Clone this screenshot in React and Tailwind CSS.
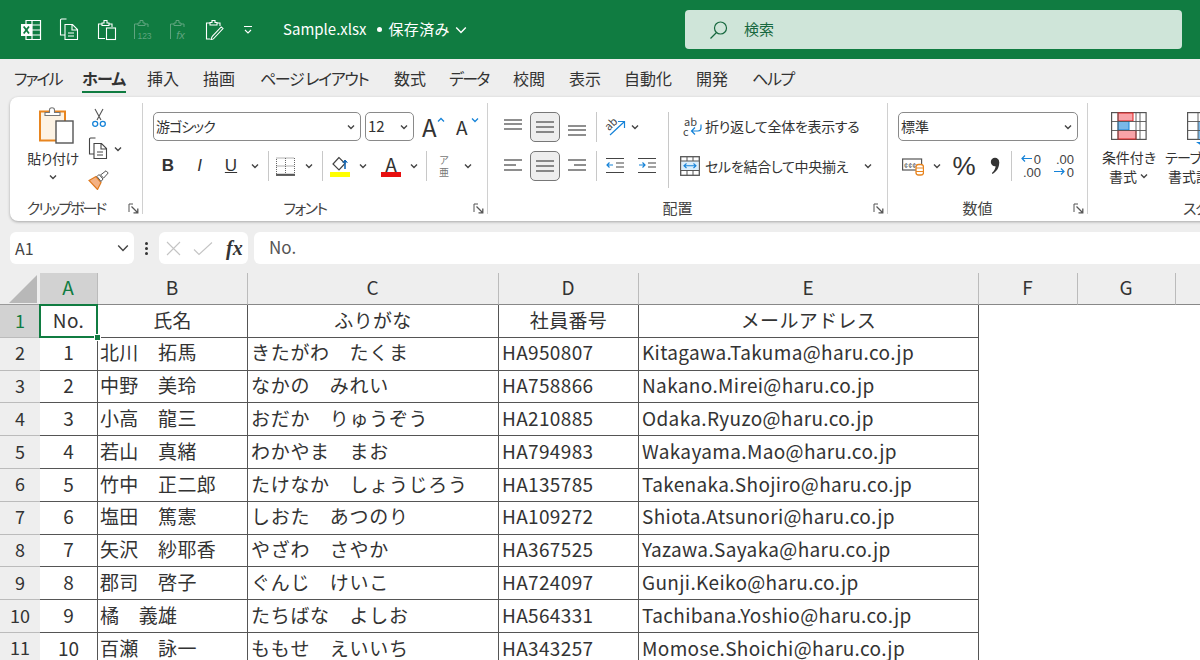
import React from "react";

const rows = [
  ["1", "北川　拓馬", "きたがわ　たくま", "HA950807", "Kitagawa.Takuma@haru.co.jp"],
  ["2", "中野　美玲", "なかの　みれい", "HA758866", "Nakano.Mirei@haru.co.jp"],
  ["3", "小高　龍三", "おだか　りゅうぞう", "HA210885", "Odaka.Ryuzo@haru.co.jp"],
  ["4", "若山　真緒", "わかやま　まお", "HA794983", "Wakayama.Mao@haru.co.jp"],
  ["5", "竹中　正二郎", "たけなか　しょうじろう", "HA135785", "Takenaka.Shojiro@haru.co.jp"],
  ["6", "塩田　篤憲", "しおた　あつのり", "HA109272", "Shiota.Atsunori@haru.co.jp"],
  ["7", "矢沢　紗耶香", "やざわ　さやか", "HA367525", "Yazawa.Sayaka@haru.co.jp"],
  ["8", "郡司　啓子", "ぐんじ　けいこ", "HA724097", "Gunji.Keiko@haru.co.jp"],
  ["9", "橘　義雄", "たちばな　よしお", "HA564331", "Tachibana.Yoshio@haru.co.jp"],
  ["10", "百瀬　詠一", "ももせ　えいいち", "HA343257", "Momose.Shoichi@haru.co.jp"],
];

const tabs = [
  { t: "ファイル", w: "w-[68px]", c: "tracking-[-2px]" },
  { t: "ホーム", w: "w-[65px]", c: "tracking-[-0.7px] font-bold" },
  { t: "挿入", w: "w-[56px]", c: "" },
  { t: "描画", w: "w-[57px]", c: "" },
  { t: "ページ レイアウト", w: "w-[134px]", c: "tracking-[-1.4px]" },
  { t: "数式", w: "w-[55px]", c: "" },
  { t: "データ", w: "w-[64px]", c: "tracking-[-1.7px]" },
  { t: "校閲", w: "w-[56px]", c: "" },
  { t: "表示", w: "w-[55px]", c: "" },
  { t: "自動化", w: "w-[72px]", c: "" },
  { t: "開発", w: "w-[56px]", c: "" },
  { t: "ヘルプ", w: "w-[60px]", c: "tracking-[-1.3px]" },
];

const Chevron = ({ size = 10, color = "#444", width = 1.4 }) => (
  <svg width={size} height={size} viewBox="0 0 10 10" fill="none" stroke={color} strokeWidth={width}>
    <path d="M2 3.5 5 6.5 8 3.5" />
  </svg>
);

const Launcher = () => (
  <svg width="11" height="11" viewBox="0 0 11 11" fill="none" stroke="#555" strokeWidth="1">
    <path d="M5 1H1v8" />
    <path d="M3.5 3.5 9.5 9.5M9.8 5.5v4.3H5.5" strokeWidth="1.3" />
  </svg>
);

const Sep = ({ className = "h-[30px]" }) => <div className={`w-px bg-[#c8c8c8] shrink-0 ${className}`} />;

const Group = ({ label, w, labelClass = "", children }) => (
  <div className={`flex flex-col shrink-0 h-[111px] border-r border-[#d0d0d0] ${w}`}>
    <div className="h-[93px] shrink-0 pt-[9px] flex flex-col">{children}</div>
    <div className="h-[24px] shrink-0 flex items-center text-[15px] text-[#444]">
      <span className={`flex-1 text-center pr-[6px] ${labelClass}`}>{label}</span>
      <span className="mr-[3px] flex">
        <Launcher />
      </span>
    </div>
  </div>
);

const Combo = ({ w, text, textClass = "text-[14px]" }) => (
  <div className={`h-[29px] rounded-[5px] border border-[#8a8a8a] bg-white flex items-center justify-between pl-[2px] pr-[4px] shrink-0 ${w}`}>
    <span className={`text-[#333] ${textClass}`}>{text}</span>
    <Chevron />
  </div>
);

const ExcelIcon = () => (
  <svg width="22" height="22" viewBox="0 0 22 22" fill="none" stroke="#fff" strokeWidth="1.2">
    <path d="M6 1.5h14.5v19H6z" />
    <path d="M12 1.5v19M12 6h8.5M12 11h8.5M12 16h8.5" />
    <rect x="1" y="5" width="11" height="12" fill="#fff" stroke="none" />
    <path d="M3.7 7.5 9 14.5M9 7.5 3.7 14.5" stroke="#107C41" strokeWidth="1.8" />
  </svg>
);

const CopyIcon = ({ color = "#fff" }) => (
  <svg width="20" height="23" viewBox="0 0 20 23" fill="none" stroke={color} strokeWidth="1.1">
    <path d="M6 17H1.5V2a1 1 0 0 1 1-1h5" />
    <path d="M6 6.5h7.5l5 5v10H6zM13 6.5V12h5.5M9 15h6M9 18h6" />
  </svg>
);

const PasteIcon = ({ color = "#fff" }) => (
  <svg width="20" height="22" viewBox="0 0 20 22" fill="none" stroke={color} strokeWidth="1.1">
    <path d="M8 19.5H1.5V5H5M12 5h3v3" />
    <path d="M5 6.5V4h2V1.5h3V4h2v2.5z" />
    <rect x="9.5" y="9" width="9" height="11.5" />
  </svg>
);

const PasteTextIcon = ({ label, italic }) => (
  <svg width="20" height="22" viewBox="0 0 20 22" fill="none" stroke="#5fa47f" strokeWidth="1">
    <path d="M1.5 20V5H5M12 5h3v3" />
    <path d="M5 6.5V4h2V1.5h3V4h2v2.5z" />
    <text x="11.5" y="20" textAnchor="middle" fontSize={italic ? 11 : 8.5} fontStyle={italic ? "italic" : "normal"} fill="#5fa47f" stroke="none" fontFamily="Liberation Sans, sans-serif">
      {label}
    </text>
  </svg>
);

const FormIcon = () => (
  <svg width="21" height="22" viewBox="0 0 21 22" fill="none" stroke="#fff" strokeWidth="1.1">
    <path d="M5 20H1.5V4H5M12 4h3v3" />
    <path d="M5 6V3.5h2V1.5h3v2h2V6z" />
    <path d="M6 20.5c1.5.2 2.5-.5 3.2-1.5L18 9.5l-1.8-1.6-8.7 9.3c-.8.9-1 2.1-1.5 3.3z" />
  </svg>
);

const Qat = () => (
  <svg width="12" height="12" viewBox="0 0 12 12" fill="none" stroke="#fff" strokeWidth="1.1">
    <path d="M2 2.5h8M3 6 6 9 9 6" />
  </svg>
);

const SearchIcon = () => (
  <svg width="20" height="20" viewBox="0 0 20 20" fill="none" stroke="#17683f" strokeWidth="1.2">
    <circle cx="11.5" cy="8" r="6" />
    <path d="M7.5 12.5 1.5 18.5" />
  </svg>
);

const ClipboardBig = () => (
  <svg width="36" height="38" viewBox="0 0 36 38" fill="none">
    <rect x="1" y="4.5" width="25" height="29" fill="#fdf3e4" stroke="#e8851f" strokeWidth="2" />
    <path d="M6 8.5V5.500h4.500V3c0-1.200 1-2.200 2.500-2.200S15.500 1.800 15.500 3v2.500H21v3z" fill="#fff" stroke="#777" strokeWidth="1.1" />
    <rect x="17" y="14" width="17" height="22" fill="#fff" stroke="#555" strokeWidth="1.4" />
  </svg>
);

const Scissors = () => (
  <svg width="16" height="20" viewBox="0 0 16 20" fill="none" stroke="#555" strokeWidth="1.1">
    <path d="M4 1 10 12M12 1 6 12" />
    <circle cx="4.2" cy="15.8" r="2.5" stroke="#1683d8" strokeWidth="1.3" />
    <circle cx="11.8" cy="15.8" r="2.5" stroke="#1683d8" strokeWidth="1.3" />
  </svg>
);

const Brush = () => (
  <svg width="22" height="20" viewBox="0 0 22 20" fill="none">
    <path d="M1 10.5 8 6.5 13 12.5 9.500 19.500z" fill="#f4b183" stroke="#e07a1f" strokeWidth="1.2" />
    <path d="M9 6.5 11 4.5 15 9 13 11.5z" fill="#fff" stroke="#555" />
    <path d="M12.5 5 18 .8l2.200 2.200-4.500 5z" fill="#fff" stroke="#555" />
  </svg>
);

const GrowA = ({ up }) => (
  <span className="relative flex items-center w-[22px] h-[24px]">
    <span className={`text-[#333] leading-none ${up ? "text-[24px]" : "text-[19px]"}`}>A</span>
    <svg className="absolute -right-[1px] top-[2px]" width="8" height="6" viewBox="0 0 8 6" fill="none" stroke="#1683d8" strokeWidth="1.3">
      <path d={up ? "M1 4.5 4 1.500 7 4.500" : "M1 1.500 4 4.500 7 1.500"} />
    </svg>
  </span>
);

const BorderIcon = () => (
  <svg width="19" height="19" viewBox="0 0 19 19" fill="none" stroke="#666" strokeWidth="1" strokeDasharray="1 1">
    <path d="M.5 1h18v16H.5zM9.500 1v16M.5 9h18" />
    <path d="M0 18h19" stroke="#222" strokeWidth="1.4" strokeDasharray="none" />
  </svg>
);

const FillIcon = () => (
  <span className="flex flex-col items-center w-[20px]">
    <svg width="20" height="16" viewBox="0 0 20 16" fill="none">
      <path d="M9 1.500 3 8l6 6 6-6.500z" fill="#fff" stroke="#444" strokeWidth="1.2" />
      <path d="M15 13V5.500" stroke="#1668b5" strokeWidth="1.6" />
      <path d="M12.800 6.500 15 4l2.500 2.500" fill="#1668b5" stroke="#1668b5" />
    </svg>
    <span className="h-[5px] w-[20px] bg-[#ffff00]" />
  </span>
);

const FontColorIcon = () => (
  <span className="flex flex-col items-center w-[20px]">
    <span className="text-[19px] leading-[16px] h-[16px] text-[#333]">A</span>
    <span className="h-[5px] w-[20px] bg-[#e81010]" />
  </span>
);

const Lines = ({ y, x }) => (
  <svg width="18" height="18" viewBox="0 0 18 18" fill="none" stroke="#444" strokeWidth="1.2">
    {y.map((yy, i) => (
      <path key={i} d={`M${x[i][0]} ${yy}H${x[i][1]}`} />
    ))}
  </svg>
);

const full = [[0, 18], [0, 18], [0, 18]];

const AlignBtn = ({ active, children }) => (
  <span className={`flex items-center justify-center w-[30px] h-[30px] rounded-[5px] shrink-0 ${active ? "border border-[#777] bg-[#eeeeee]" : ""}`}>{children}</span>
);

const OrientIcon = () => (
  <span className="relative block w-[22px] h-[20px]">
    <span className="absolute left-0 top-[1px] text-[11px] leading-none text-[#444] -rotate-45">ab</span>
    <svg className="absolute inset-0" width="22" height="20" viewBox="0 0 22 20" fill="none" stroke="#1683d8" strokeWidth="1.2">
      <path d="M6 18 20 5M14 4.500h6.500V11" />
    </svg>
  </span>
);

const IndentIcon = ({ out }) => (
  <svg width="18" height="18" viewBox="0 0 18 18" fill="none" strokeWidth="1.2">
    <path d="M0 1.500h18M10 6h8M10 10h8M0 15.500h18" stroke="#444" />
    <path d={out ? "M7 8H1M3.500 5.500 1 8l2.500 2.500" : "M1 8h6M4.500 5.500 7 8l-2.500 2.500"} stroke="#1683d8" />
  </svg>
);

const WrapIcon = () => (
  <span className="relative block w-[22px] h-[22px] text-[11px] leading-[10px] text-[#444]">
    <span className="block pl-[2px]">ab</span>
    <span className="block pl-[1px]">c</span>
    <svg className="absolute right-0 top-[7px]" width="14" height="13" viewBox="0 0 14 13" fill="none" stroke="#1683d8" strokeWidth="1.2">
      <path d="M11 1.500v3.500c0 2-1.500 3-3 3H2M5 4.500 1.500 8 5 11.500" />
    </svg>
  </span>
);

const MergeIcon = () => (
  <svg width="20" height="20" viewBox="0 0 20 20" fill="none">
    <rect x=".7" y=".7" width="18.6" height="18.6" fill="#fff" stroke="#555" strokeWidth="1.3" />
    <rect x="1.500" y="5" width="17" height="9.5" fill="#dbeefb" />
    <path d="M1 5h18M1 14.500h18M7 1v4M13 1v4M7 14.500v5M13 14.500v5" stroke="#555" strokeWidth="1" />
    <path d="M4 9.700h12M6.500 7.500 4 9.700l2.500 2.300M13.500 7.500 16 9.700l-2.500 2.300" stroke="#1683d8" strokeWidth="1.1" />
  </svg>
);

const CurrencyIcon = () => (
  <svg width="22" height="20" viewBox="0 0 22 20" fill="none">
    <rect x=".6" y="3" width="19" height="11" fill="#fff" stroke="#555" strokeWidth="1.2" />
    <text x="2" y="11.5" fontSize="7.5" fill="#555" fontFamily="Liberation Sans, sans-serif">¢¢¢</text>
    <rect x="14" y="8.5" width="7.5" height="10.5" rx="2.5" fill="#fff" stroke="#e8851f" strokeWidth="1.3" />
    <path d="M14 12h7.500M14 15.500h7.500" stroke="#e8851f" />
  </svg>
);

const CommaIcon = () => (
  <svg width="10" height="18" viewBox="0 0 10 18" fill="#333">
    <circle cx="5" cy="5" r="4.2" />
    <path d="M9.200 5c.3 5.500-2.500 9.500-6.700 12l-.6-.9C4.500 13.500 5.800 11 5.500 8.500z" />
  </svg>
);

const DecimalIcon = ({ more }) => (
  <span className="relative block w-[21px] h-[26px] text-[13px] leading-[13px] text-[#444] text-right font-['Liberation_Sans']">
    <span className="block h-[13px]">{more ? ".00" : "0"}</span>
    <span className="block h-[13px]">{more ? "0" : ".00"}</span>
    <svg className={`absolute left-0 ${more ? "top-[14px]" : "top-[1px]"}`} width="13" height="9" viewBox="0 0 13 9" fill="none" stroke="#1683d8" strokeWidth="1.2">
      <path d={more ? "M1 4.500h10M8 1.500l3 3-3 3" : "M12 4.500H2M5 1.500l-3 3 3 3"} />
    </svg>
  </span>
);

const CondIcon = () => (
  <svg width="36" height="28" viewBox="0 0 36 28" fill="none">
    <rect x=".6" y=".6" width="34.5" height="26.8" fill="#fff" stroke="#555" strokeWidth="1.2" />
    <rect x="7" y="1" width="15" height="8" fill="#f8a3a8" stroke="#e02020" />
    <rect x="7" y="9.5" width="11" height="8.5" fill="#7ab8e8" stroke="#1683d8" />
    <rect x="7" y="18.5" width="18" height="8.5" fill="#f8a3a8" stroke="#e02020" />
    <path d="M7 1v26M25 1v26M29 1v26M1 9.500h34M1 18.500h34" stroke="#555" strokeWidth=".9" />
  </svg>
);

const TableIcon = () => (
  <svg width="36" height="34" viewBox="0 0 36 34" fill="none">
    <rect x=".6" y=".6" width="34.5" height="26.8" fill="#fff" stroke="#555" strokeWidth="1.2" />
    <rect x="11" y="9.5" width="13" height="17.5" fill="#7ab8e8" />
    <path d="M11 1v26M24 1v26M1 9.500h34M1 18.500h34" stroke="#555" strokeWidth=".9" />
    <path d="M9 30h9l-4.500 3z" fill="#1683d8" />
  </svg>
);

const TitleBar = () => (
  <div className="h-[59px] bg-[#107C41] flex items-center shrink-0 text-white">
    <div className="flex items-center pl-[20px] w-[283px]">
      <span className="w-[39px] flex"><ExcelIcon /></span>
      <span className="w-[38px] flex"><CopyIcon /></span>
      <span className="w-[36px] flex"><PasteIcon /></span>
      <span className="w-[36px] flex"><PasteTextIcon label="123" /></span>
      <span className="w-[36px] flex"><PasteTextIcon label="fx" italic /></span>
      <span className="w-[37px] flex"><FormIcon /></span>
      <Qat />
    </div>
    <div className="flex items-center w-[402px] text-[15px] gap-[4px]">
      <span>Sample.xlsx</span>
      <span className="w-[5px] h-[5px] rounded-full bg-white ml-[6px] mr-[3px]" />
      <span className="tracking-[0.3px]">保存済み</span>
      <Chevron size={16} color="#fff" width={0.9} />
    </div>
    <div className="h-[39px] w-[497px] rounded-[4px] bg-[#cfe5d9] flex items-center pl-[24px] gap-[15px] text-[#17683f] text-[15px]">
      <SearchIcon />
      <span>検索</span>
    </div>
  </div>
);

const Tabs = () => (
  <div className="h-[38px] flex items-center pl-[14px] shrink-0 text-[16px] text-[#333]">
    {tabs.map(({ t, w, c }) => (
      <span key={t} className={`shrink-0 ${w}`}>
        <span className={`relative inline-block whitespace-nowrap ${c}`}>
          {t}
          {t === "ホーム" && <span className="absolute left-0 right-0 bottom-[-3px] h-[2px] bg-[#107C41]" />}
        </span>
      </span>
    ))}
  </div>
);

const Ribbon = () => (
  <div className="h-[124px] w-[1230px] ml-[10px] shrink-0 rounded-[8px] bg-white shadow-[0_1px_3px_rgba(0,0,0,0.3)] flex items-start pt-[6px]">
    <Group label="クリップボード" w="w-[133px]" labelClass="tracking-[-2px]">
      <div className="flex">
        <div className="flex flex-col items-center w-[52px] ml-[17px] -mt-[5px] text-[14px] text-[#333]">
          <span className="pl-[8px] flex"><ClipboardBig /></span>
          <span className="mt-[3px] tracking-[-0.4px]">貼り付け</span>
          <span className="mt-[3px]"><Chevron /></span>
        </div>
        <div className="flex flex-col pl-[9px] -mt-[10px]">
          <span className="h-[31px] flex items-center pl-[3px]"><Scissors /></span>
          <span className="h-[31px] flex items-center gap-[5px]">
            <CopyIcon color="#444" />
            <Chevron />
          </span>
          <span className="h-[31px] flex items-center"><Brush /></span>
        </div>
      </div>
    </Group>

    <Group label="フォント" w="w-[345px]" labelClass="tracking-[-1.5px]">
      <div className="flex items-center pl-[10px]">
        <Combo w="w-[208px]" text="游ゴシック" textClass="text-[14px] tracking-[-1px]" />
        <span className="w-[4px]" />
        <Combo w="w-[49px]" text="12" textClass="text-[15px]" />
        <span className="w-[8px]" />
        <GrowA up />
        <span className="w-[12px]" />
        <GrowA />
      </div>
      <div className="flex items-center h-[30px] mt-[10px] pl-[9px] text-[#333]">
        <span className="w-[32px] text-center font-bold text-[17px] font-['Liberation_Sans']">B</span>
        <span className="w-[31px] text-center italic text-[17px] font-['Liberation_Sans']">I</span>
        <span className="w-[32px] text-center underline text-[17px] font-['Liberation_Sans']">U</span>
        <span className="w-[16px] flex justify-center"><Chevron /></span>
        <span className="w-[5px]" />
        <Sep />
        <span className="w-[7px]" />
        <BorderIcon />
        <span className="w-[6px]" />
        <span className="w-[16px] flex justify-center"><Chevron /></span>
        <span className="w-[5px]" />
        <Sep />
        <span className="w-[7px]" />
        <FillIcon />
        <span className="w-[5px]" />
        <span className="w-[16px] flex justify-center"><Chevron /></span>
        <span className="w-[10px]" />
        <FontColorIcon />
        <span className="w-[5px]" />
        <span className="w-[16px] flex justify-center"><Chevron /></span>
        <span className="w-[4px]" />
        <Sep />
        <span className="w-[10px]" />
        <span className="flex flex-col items-center w-[14px] text-[10px] leading-[12px] text-[#777]">
          <span>ア</span>
          <span>亜</span>
        </span>
        <span className="w-[9px]" />
        <span className="w-[16px] flex justify-center"><Chevron /></span>
      </div>
    </Group>

    <Group label="配置" w="w-[400px]">
      <div className="flex items-center h-[29px] pl-[10px]">
        <AlignBtn><Lines y={[2, 6, 11]} x={full} /></AlignBtn>
        <span className="w-[2px]" />
        <AlignBtn active><Lines y={[4, 9, 14]} x={full} /></AlignBtn>
        <span className="w-[2px]" />
        <AlignBtn><Lines y={[8, 12, 17]} x={full} /></AlignBtn>
        <span className="w-[4px]" />
        <Sep />
        <span className="w-[7px]" />
        <OrientIcon />
        <span className="w-[4px]" />
        <Chevron />
        <span className="w-[28px]" />
        <Sep className="h-[76px] self-start" />
        <span className="w-[13px]" />
        <WrapIcon />
        <span className="w-[1px]" />
        <span className="text-[14px] text-[#333] tracking-[-0.3px]">折り返して全体を表示する</span>
      </div>
      <div className="flex items-center h-[30px] mt-[10px] pl-[10px]">
        <AlignBtn><Lines y={[3, 8, 13]} x={[[0, 18], [0, 12], [0, 18]]} /></AlignBtn>
        <span className="w-[2px]" />
        <AlignBtn active><Lines y={[4, 9, 14]} x={full} /></AlignBtn>
        <span className="w-[2px]" />
        <AlignBtn><Lines y={[3, 8, 13]} x={[[0, 18], [6, 18], [0, 18]]} /></AlignBtn>
        <span className="w-[4px]" />
        <Sep />
        <span className="w-[9px]" />
        <IndentIcon out />
        <span className="w-[14px]" />
        <IndentIcon />
        <span className="w-[24px]" />
        <MergeIcon />
        <span className="w-[5px]" />
        <span className="text-[14px] text-[#333] tracking-[-0.3px]">セルを結合して中央揃え</span>
        <span className="w-[15px]" />
        <Chevron />
      </div>
    </Group>

    <Group label="数値" w="w-[200px]">
      <div className="flex pl-[10px]">
        <Combo w="w-[180px]" text="標準" />
      </div>
      <div className="flex items-center h-[30px] mt-[10px] pl-[14px] text-[#333]">
        <CurrencyIcon />
        <span className="w-[8px]" />
        <Chevron />
        <span className="w-[9px]" />
        <span className="w-[26px] text-center text-[26px] leading-none font-['Liberation_Sans']">%</span>
        <span className="w-[13px]" />
        <CommaIcon />
        <span className="w-[11px]" />
        <Sep />
        <span className="w-[8px]" />
        <DecimalIcon />
        <span className="w-[12px]" />
        <DecimalIcon more />
      </div>
    </Group>

    <div className="flex flex-col h-[111px] shrink-0">
      <div className="h-[93px] shrink-0 pt-[9px] flex text-[14px] text-[#333] leading-[20px]">
        <div className="flex flex-col items-center w-[76px] pl-[6px] shrink-0">
          <CondIcon />
          <span className="mt-[7px] whitespace-nowrap">条件付き</span>
          <span className="flex items-center gap-[2px] -mt-[1px]">書式<Chevron /></span>
        </div>
        <div className="flex flex-col items-start shrink-0 pl-[1px]">
          <span className="ml-[22px] flex h-[35px]"><TableIcon /></span>
          <span className="whitespace-nowrap tracking-[-0.5px]">テーブルとして</span>
          <span className="pl-[3px] whitespace-nowrap -mt-[1px]">書式設定</span>
        </div>
      </div>
      <div className="h-[24px] shrink-0 flex items-center text-[15px] text-[#444] pl-[95px] tracking-[-1px]">スタイル</div>
    </div>
  </div>
);

const FormulaBar = () => (
  <div className="h-[32px] mt-[11px] flex items-stretch shrink-0 pl-[10px]">
    <div className="w-[124px] rounded-[6px] bg-white flex items-center justify-between pl-[5px] pr-[3px] text-[16px] text-[#444]">
      <span>A1</span>
      <Chevron size={16} width={0.9} />
    </div>
    <div className="w-[25px] flex flex-col items-center justify-center gap-[2px]">
      <span className="w-[3px] h-[3px] rounded-full bg-[#333]" />
      <span className="w-[3px] h-[3px] rounded-full bg-[#333]" />
      <span className="w-[3px] h-[3px] rounded-full bg-[#333]" />
    </div>
    <div className="w-[89px] rounded-[6px] bg-white flex items-center pl-[7px]">
      <svg width="15" height="15" viewBox="0 0 15 15" fill="none" stroke="#c4c4c4" strokeWidth="1.1">
        <path d="M1 1l13 13M14 1 1 14" />
      </svg>
      <svg className="ml-[12px]" width="20" height="15" viewBox="0 0 20 15" fill="none" stroke="#c4c4c4" strokeWidth="1.1">
        <path d="M1 8.500 6 13.500 19 1.500" />
      </svg>
      <span className="ml-[13px] italic font-bold text-[20px] leading-none text-[#333] font-['Liberation_Serif']">fx</span>
    </div>
    <div className="w-[6px]" />
    <div className="flex-1 rounded-l-[6px] bg-white flex items-center pl-[15px] pb-[2px] text-[17px] text-[#555]">No.</div>
  </div>
);

const headers = ["A", "B", "C", "D", "E", "F", "G", ""];
const cellBase = "border-r border-b border-[#555] pb-[2px] flex items-center text-[19px] text-[#333] whitespace-nowrap overflow-hidden [font-feature-settings:normal]";

const Sheet = () => (
  <div className="mt-[9px] grid grid-cols-[40px_58px_150px_251px_140px_340px_99px_98px_30px] grid-rows-[32px] auto-rows-[32.8px] bg-white flex-1 overflow-hidden">
    <div className="bg-[#eeeeee] border-b border-[#9a9a9a] flex items-end justify-end pr-[3px] pb-[1px]">
      <div className="w-[28px] h-[28px] bg-[#b8b8b8] [clip-path:polygon(100%_0,100%_100%,0_100%)]" />
    </div>
    {headers.map((h, i) => (
      <div
        key={i}
        className={`flex items-center justify-center pb-[2px] pr-[1px] text-[19px] border-r border-b border-[#bbbbbb] ${i === 0 ? "bg-[#d2d2d2] text-[#107C41] border-b-[#107C41]" : "bg-[#eeeeee] text-[#333] border-b-[#888]"}`}
      >
        {h}
      </div>
    ))}

    <div className="bg-[#d2d2d2] text-[#107C41] border-b border-[#bbbbbb] flex items-center justify-center text-[18px]">1</div>
    <div className={`${cellBase} justify-center relative overflow-visible tracking-[0.35px]`}>
      No.
      <span className="absolute -inset-[1px] border-2 border-[#107C41]" />
      <span className="absolute -right-[3px] -bottom-[3px] w-[5px] h-[5px] bg-[#107C41] outline outline-1 outline-white" />
    </div>
    <div className={`${cellBase} justify-center tracking-[0.35px]`}>氏名</div>
    <div className={`${cellBase} justify-center tracking-[0.35px]`}>ふりがな</div>
    <div className={`${cellBase} justify-center tracking-[0.35px]`}>社員番号</div>
    <div className={`${cellBase} justify-center tracking-[0.35px]`}>メールアドレス</div>
    <div className="col-span-3" />

    {rows.map((r, i) => (
      <React.Fragment key={i}>
        <div className="bg-[#eeeeee] border-b border-[#bbbbbb] pb-[2px] flex items-center justify-center text-[18px] text-[#333]">{i + 2}</div>
        <div className={`${cellBase} justify-center`}>{r[0]}</div>
        <div className={`${cellBase} pl-[2px] tracking-[0.35px]`}>{r[1]}</div>
        <div className={`${cellBase} pl-[3px] tracking-[0.7px]`}>{r[2]}</div>
        <div className={`${cellBase} pl-[3px] tracking-[0.35px]`}>{r[3]}</div>
        <div className={`${cellBase} pl-[3px] tracking-[0.35px]`}>{r[4]}</div>
        <div className="col-span-3" />
      </React.Fragment>
    ))}
  </div>
);

export default function App() {
  return (
    <div className="w-[1200px] h-[660px] overflow-hidden flex flex-col bg-[#eeeeee] font-['Noto_Sans_CJK_JP',sans-serif] [font-feature-settings:'palt']">
      <TitleBar />
      <Tabs />
      <Ribbon />
      <FormulaBar />
      <Sheet />
    </div>
  );
}
